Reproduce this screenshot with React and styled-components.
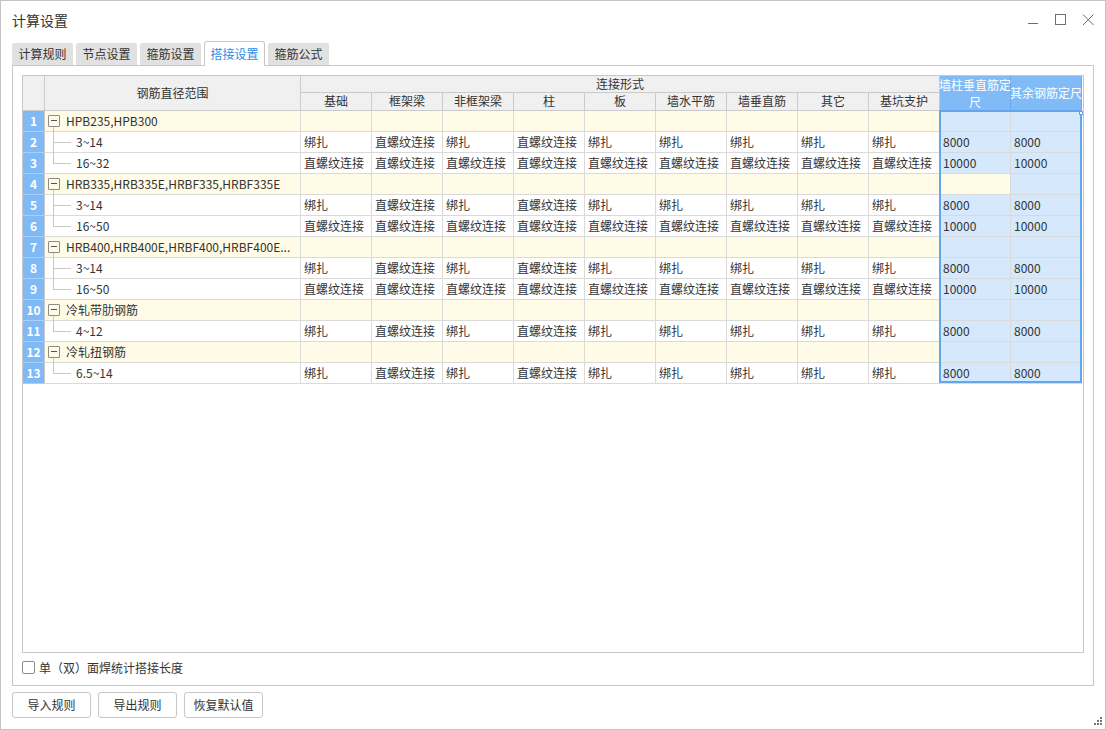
import React from 'react';
import styled, { createGlobalStyle, css } from 'styled-components';

const GlobalStyle = createGlobalStyle`
  html, body { margin: 0; padding: 0; background: #fff; }
  body {
    font-family: "Noto Sans CJK SC", "Noto Sans", sans-serif;
    font-size: 12px;
    color: #333;
  }
  * { box-sizing: border-box; }
`;

const COLS = '22px 256px repeat(11, 71px)';
const LINE = '#dadada';
const HEAD_LINE = '#cacaca';

const Window = styled.div`
  position: relative;
  width: 1106px;
  height: 730px;
  border: 1px solid #c4c4c4;
  background: #fff;
  display: flex;
  flex-direction: column;
`;

const TitleBar = styled.div`
  height: 40px;
  display: flex;
  align-items: center;
  justify-content: space-between;
  padding-left: 11px;
  padding-right: 3px;
`;

const Title = styled.div`
  font-size: 14px;
  color: #333;
  line-height: 20px;
  margin-top: -2px;
`;

const Controls = styled.div`
  display: flex;
  align-items: center;
`;

const ControlButton = styled.div`
  width: 28px;
  height: 28px;
  display: flex;
  svg { display: block; }
`;

const Body = styled.div`
  padding: 0 11px;
  display: flex;
  flex-direction: column;
`;

const TabRow = styled.div`
  height: 24px;
  display: flex;
  align-items: flex-end;
  gap: 3px;
  position: relative;
  z-index: 1;
`;

const Tab = styled.div`
  width: 61px;
  height: 22px;
  display: flex;
  align-items: center;
  justify-content: center;
  background: #e1e1e1;
  color: #333;
  border-radius: 2px 2px 0 0;
  font-size: 12px;
  padding-bottom: 1px;
  ${(p) =>
    p.$active &&
    css`
      height: 25px;
      margin-bottom: -1px;
      background: #fff;
      color: #2d8ce6;
      border: 1px solid #c8c8c8;
      border-bottom: none;
      border-radius: 3px 3px 0 0;
      padding-bottom: 2px;
    `}
`;

const Panel = styled.div`
  height: 621px;
  border: 1px solid #c8c8c8;
  padding: 9px 9px 0 9px;
  display: flex;
  flex-direction: column;
`;

const Grid = styled.div`
  position: relative;
  height: 578px;
  border: 1px solid #c8c8c8;
  background: #fff;
  overflow: hidden;
`;

const HeadGrid = styled.div`
  display: grid;
  grid-template-columns: ${COLS};
  grid-template-rows: 17px 18px;
`;

const HeadCell = styled.div`
  grid-column: ${(p) => p.$col};
  grid-row: ${(p) => p.$row};
  background: #f0f0f0;
  border-right: 1px solid ${HEAD_LINE};
  border-bottom: 1px solid ${HEAD_LINE};
  display: flex;
  align-items: center;
  justify-content: center;
  text-align: center;
  color: #333;
  font-size: 12px;
  line-height: 16px;
  white-space: nowrap;
  padding-bottom: 1px;
  ${(p) =>
    p.$selected &&
    css`
      background: #80bbf7;
      color: #fff;
      border-right-color: #6aa9ee;
      border-bottom-color: #6aa9ee;
      border-top: 1px solid #6aa9ee;
      margin-top: -1px;
      line-height: 17px;
    `}
`;

const DataRow = styled.div`
  display: grid;
  grid-template-columns: ${COLS};
  height: 21px;
`;

const RowNum = styled.div`
  background: #7fbaf6;
  color: #fff;
  font-weight: bold;
  font-size: 12px;
  display: flex;
  align-items: center;
  justify-content: center;
  padding-bottom: 1px;
  border-right: 1px solid #c9c9c9;
  border-bottom: 1px solid #a8cff8;
  border-left: 1px solid #5e9fe6;
  margin-left: -1px;
`;

const toneBg = { white: '#fff', group: '#fffbe6', sel: '#d5e8fc' };

const Cell = styled.div`
  background: ${(p) => toneBg[p.$tone]};
  border-right: 1px solid ${LINE};
  border-bottom: 1px solid ${LINE};
  display: flex;
  align-items: center;
  padding-left: 3px;
  padding-bottom: 2px;
  white-space: nowrap;
  overflow: hidden;
  font-size: 12px;
  color: #333;
`;

const NameCell = styled(Cell)`
  padding-left: 0;
  overflow: visible;
`;

const Expander = styled.span`
  position: relative;
  width: 12px;
  height: 12px;
  margin-left: 3px;
  margin-right: 6px;
  margin-top: 2px;
  border: 1px solid #8c8c8c;
  border-radius: 1px;
  background: transparent;
  flex: none;
  &::before {
    content: '';
    position: absolute;
    left: 2px;
    top: 4px;
    width: 6px;
    height: 1px;
    background: #555;
  }
  &::after {
    content: '';
    position: absolute;
    left: 4px;
    top: 11px;
    width: 1px;
    height: 5px;
    background: #c8c8c8;
  }
`;

const TreeGuide = styled.span`
  position: relative;
  width: 31px;
  align-self: stretch;
  flex: none;
  margin-bottom: -3px;
  &::before {
    content: '';
    position: absolute;
    left: 8px;
    top: 0;
    width: 1px;
    height: ${(p) => (p.$last ? '10px' : '100%')};
    background: #c8c8c8;
  }
  &::after {
    content: '';
    position: absolute;
    left: 8px;
    top: 10px;
    width: 18px;
    height: 1px;
    background: #c8c8c8;
  }
`;

const Selection = styled.div`
  position: absolute;
  left: 916px;
  top: 34px;
  width: 143px;
  height: 273px;
  border: 2px solid #64a6ec;
  pointer-events: none;
`;

const Handle = styled.div`
  position: absolute;
  right: -3px;
  top: -1px;
  width: 4px;
  height: 4px;
  background: #fff;
  border: 1px solid #64a6ec;
`;

const CheckRow = styled.label`
  height: 28px;
  display: flex;
  align-items: center;
  gap: 4px;
  font-size: 12px;
  color: #333;
`;

const CheckBox = styled.span`
  width: 13px;
  height: 13px;
  border: 1px solid #8a8a8a;
  border-radius: 2px;
  background: #fff;
`;

const ButtonRow = styled.div`
  display: flex;
  gap: 7px;
  margin-top: 6px;
`;

const Button = styled.button`
  width: 79px;
  height: 26px;
  border: 1px solid #c8c8c8;
  border-radius: 3px;
  background: #fff;
  color: #333;
  font-family: inherit;
  font-size: 12px;
  padding: 0 0 1px 0;
  cursor: pointer;
`;

const Grip = styled.svg`
  position: absolute;
  right: 3px;
  bottom: 3px;
`;

const B = '绑扎';
const Z = '直螺纹连接';
const MIX = [B, Z, B, Z, B, B, B, B, B];
const ALLZ = [Z, Z, Z, Z, Z, Z, Z, Z, Z];

const rows = [
  { group: 'HPB235,HPB300' },
  { name: '3~14', cells: MIX, fixed: ['8000', '8000'] },
  { name: '16~32', cells: ALLZ, fixed: ['10000', '10000'], last: true },
  { group: 'HRB335,HRB335E,HRBF335,HRBF335E', cursor: true },
  { name: '3~14', cells: MIX, fixed: ['8000', '8000'] },
  { name: '16~50', cells: ALLZ, fixed: ['10000', '10000'], last: true },
  { group: 'HRB400,HRB400E,HRBF400,HRBF400E...' },
  { name: '3~14', cells: MIX, fixed: ['8000', '8000'] },
  { name: '16~50', cells: ALLZ, fixed: ['10000', '10000'], last: true },
  { group: '冷轧带肋钢筋' },
  { name: '4~12', cells: MIX, fixed: ['8000', '8000'], last: true },
  { group: '冷轧扭钢筋' },
  { name: '6.5~14', cells: MIX, fixed: ['8000', '8000'], last: true },
];

const subHeads = ['基础', '框架梁', '非框架梁', '柱', '板', '墙水平筋', '墙垂直筋', '其它', '基坑支护'];

function Row({ row, index }) {
  if (row.group) {
    return (
      <DataRow>
        <RowNum>{index}</RowNum>
        <NameCell $tone="group">
          <Expander />
          {row.group}
        </NameCell>
        {subHeads.map((h) => (
          <Cell key={h} $tone="group" />
        ))}
        <Cell $tone={row.cursor ? 'group' : 'sel'} />
        <Cell $tone="sel" />
      </DataRow>
    );
  }
  return (
    <DataRow>
      <RowNum>{index}</RowNum>
      <NameCell $tone="white">
        <TreeGuide $last={row.last} />
        {row.name}
      </NameCell>
      {row.cells.map((c, i) => (
        <Cell key={i} $tone="white">
          {c}
        </Cell>
      ))}
      {row.fixed.map((c, i) => (
        <Cell key={'f' + i} $tone="sel">
          {c}
        </Cell>
      ))}
    </DataRow>
  );
}

export default function App() {
  return (
    <>
      <GlobalStyle />
      <Window>
        <TitleBar>
          <Title>计算设置</Title>
          <Controls>
            <ControlButton>
              <svg width="28" height="28" viewBox="0 0 28 28">
                <line x1="10" y1="16.5" x2="20" y2="16.5" stroke="#6e6e6e" strokeWidth="1" />
              </svg>
            </ControlButton>
            <ControlButton>
              <svg width="28" height="28" viewBox="0 0 28 28">
                <rect x="9.5" y="7.5" width="10" height="10" fill="none" stroke="#6e6e6e" strokeWidth="1" />
              </svg>
            </ControlButton>
            <ControlButton>
              <svg width="28" height="28" viewBox="0 0 28 28">
                <path d="M9 7.5 L19.5 18 M19.5 7.5 L9 18" stroke="#6e6e6e" strokeWidth="1" fill="none" />
              </svg>
            </ControlButton>
          </Controls>
        </TitleBar>
        <Body>
          <TabRow>
            <Tab>计算规则</Tab>
            <Tab>节点设置</Tab>
            <Tab>箍筋设置</Tab>
            <Tab $active>搭接设置</Tab>
            <Tab>箍筋公式</Tab>
          </TabRow>
          <Panel>
            <Grid>
              <HeadGrid>
                <HeadCell $col="1" $row="1 / span 2" />
                <HeadCell $col="2" $row="1 / span 2">钢筋直径范围</HeadCell>
                <HeadCell $col="3 / span 9" $row="1">连接形式</HeadCell>
                {subHeads.map((h, i) => (
                  <HeadCell key={h} $col={String(3 + i)} $row="2">
                    {h}
                  </HeadCell>
                ))}
                <HeadCell $col="12" $row="1 / span 2" $selected>
                  墙柱垂直筋定
                  <br />
                  尺
                </HeadCell>
                <HeadCell $col="13" $row="1 / span 2" $selected>
                  其余钢筋定尺
                </HeadCell>
              </HeadGrid>
              {rows.map((r, i) => (
                <Row key={i} row={r} index={i + 1} />
              ))}
              <Selection>
                <Handle />
              </Selection>
            </Grid>
            <CheckRow>
              <CheckBox />
              单（双）面焊统计搭接长度
            </CheckRow>
          </Panel>
          <ButtonRow>
            <Button>导入规则</Button>
            <Button>导出规则</Button>
            <Button>恢复默认值</Button>
          </ButtonRow>
        </Body>
        <Grip width="9" height="9" viewBox="0 0 9 9">
          <rect x="7" y="0" width="2" height="2" fill="#777" />
          <rect x="4" y="3" width="2" height="2" fill="#777" />
          <rect x="7" y="3" width="2" height="2" fill="#777" />
          <rect x="1" y="6" width="2" height="2" fill="#777" />
          <rect x="4" y="6" width="2" height="2" fill="#777" />
          <rect x="7" y="6" width="2" height="2" fill="#777" />
        </Grip>
      </Window>
    </>
  );
}
